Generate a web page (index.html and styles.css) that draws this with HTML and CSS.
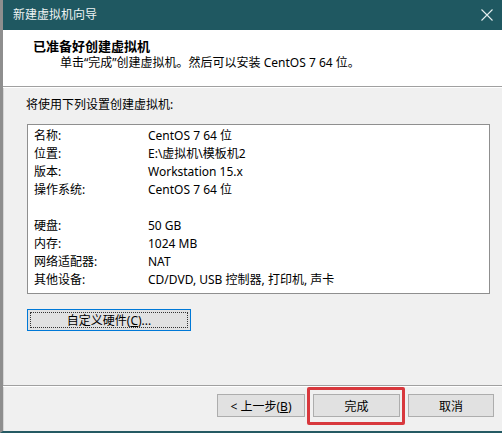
FILE: index.html
```html
<!DOCTYPE html>
<html lang="zh-CN">
<head>
<meta charset="utf-8">
<title>新建虚拟机向导</title>
<link rel="stylesheet" href="styles.css">
</head>
<body>
<div class="window">
  <div class="titlebar">
    <span class="title">新建虚拟机向导</span>
    <svg class="close" width="12" height="12" viewBox="0 0 12 12"><path d="M0.5 0.5 L11.5 11.5 M11.5 0.5 L0.5 11.5" stroke="#e6eeee" stroke-width="1.1" fill="none"/></svg>
  </div>
  <div class="header">
    <div class="h-title">已准备好创建虚拟机</div>
    <div class="h-sub">单击“完成”创建虚拟机。然后可以安装 CentOS 7 64 位。</div>
  </div>
  <div class="sep"></div>
  <div class="content">
    <div class="intro">将使用下列设置创建虚拟机:</div>
    <div class="listbox">
      <div class="row"><span>名称:</span><span>CentOS 7 64 位</span></div>
      <div class="row"><span>位置:</span><span>E:\虚拟机\模板机2</span></div>
      <div class="row"><span>版本:</span><span>Workstation 15.x</span></div>
      <div class="row"><span>操作系统:</span><span>CentOS 7 64 位</span></div>
      <div class="row"><span></span><span></span></div>
      <div class="row"><span>硬盘:</span><span>50 GB</span></div>
      <div class="row"><span>内存:</span><span>1024 MB</span></div>
      <div class="row"><span>网络适配器:</span><span>NAT</span></div>
      <div class="row"><span>其他设备:</span><span>CD/DVD, USB 控制器, 打印机, 声卡</span></div>
    </div>
    <button class="btn custom"><span class="focus">自定义硬件(<u>C</u>)...</span></button>
  </div>
  <div class="sep"></div>
  <div class="footer">
    <button class="btn back">&lt; 上一步(<u>B</u>)</button>
    <span class="mark"><button class="btn finish">完成</button></span>
    <button class="btn cancel">取消</button>
  </div>
</div>
</body>
</html>
```
FILE: styles.css
```css
html, body {
  margin: 0;
  padding: 0;
  background: #f0f0f0;
}
body {
  font-family: "Noto Sans", "Noto Sans CJK SC", sans-serif;
  font-size: 12px;
  color: #000;
}
.window {
  width: 502px;
  height: 433px;
  box-sizing: border-box;
  display: flex;
  flex-direction: column;
  border-left: 3px solid #8e8e8e;
  border-bottom: 2px solid #245a63;
  background: #f0f0f0;
  overflow: hidden;
  box-shadow: inset 1px 0 0 #d6d6d6;
}
.titlebar {
  height: 30px;
  background: #1f5861;
  display: flex;
  align-items: center;
  justify-content: space-between;
  padding: 0 9px 0 10px;
  flex: none;
}
.title {
  color: #eef3f3;
  font-size: 12px;
  line-height: 16px;
}
.close {
  display: block;
}
.header {
  background: #fff;
  height: 56px;
  box-sizing: border-box;
  padding: 8px 0 0 30px;
  flex: none;
}
.h-title {
  font-weight: bold;
  font-size: 13px;
  line-height: 17px;
}
.h-sub {
  padding-left: 27px;
  line-height: 16px;
}
.sep {
  height: 1px;
  background: #a0a0a0;
  border-bottom: 1px solid #fff;
  flex: none;
}
.content {
  flex: 1;
  padding: 8px 0 0 23px;
}
.intro {
  line-height: 18px;
}
.listbox {
  margin: 10px 0 0 1px;
  width: 463px;
  box-sizing: border-box;
  background: #fff;
  border: 1px solid #8f8f8f;
  padding: 2px 0 4px 6px;
}
.row {
  display: grid;
  grid-template-columns: 114px 1fr;
  height: 18px;
  line-height: 18px;
  white-space: nowrap;
}
.btn {
  font-family: inherit;
  font-size: 12px;
  color: #000;
  background: #e1e1e1;
  border: 1px solid #adadad;
  padding: 0;
  margin: 0;
  height: 23px;
  box-sizing: border-box;
}
.custom {
  display: block;
  margin: 15px 0 0 1px;
  width: 164px;
  height: 22px;
  border-color: #0078d7;
  padding: 2px;
}
.focus {
  display: block;
  height: 16px;
  line-height: 15px;
  box-sizing: border-box;
  border: 1px dotted #333;
}
.footer {
  height: 37px;
  display: flex;
  justify-content: flex-end;
  align-items: flex-start;
  gap: 8px;
  padding: 7px 8px 0 0;
  flex: none;
}
.back { width: 88px; }
.finish { width: 87px; display: block; }
.cancel { width: 86px; }
.mark {
  position: relative;
  display: block;
}
.mark::after {
  content: "";
  position: absolute;
  left: -6px;
  right: -5px;
  top: -7px;
  bottom: -8px;
  border: 3px solid #d8383d;
  border-radius: 2px;
}
```
